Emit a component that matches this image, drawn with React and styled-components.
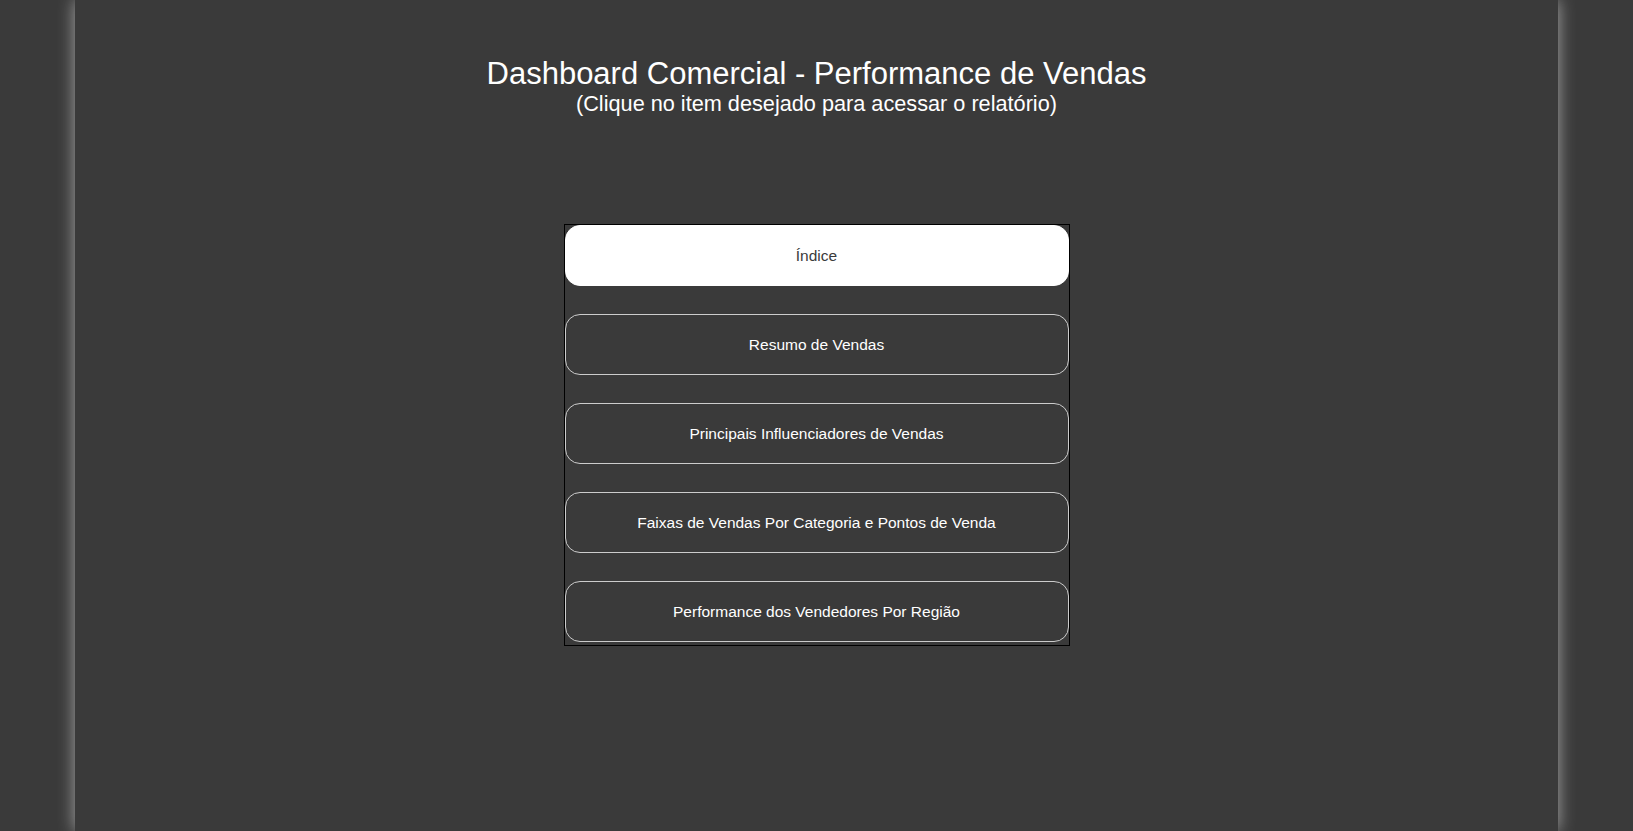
import React from 'react';
import styled, { createGlobalStyle } from 'styled-components';

const GlobalStyle = createGlobalStyle`
  html, body {
    margin: 0;
    padding: 0;
    background-color: #3a3a3a;
    font-family: "Liberation Sans", Arial, sans-serif;
  }
`;

const Page = styled.div`
  width: 1483px;
  min-height: 100vh;
  margin: 0 auto;
  background-color: #3a3a3a;
  box-shadow: 0 0 16px rgba(255, 255, 255, 0.55);
  display: flex;
  flex-direction: column;
  align-items: center;
  padding-top: 56px;
  box-sizing: border-box;
`;

const Header = styled.header`
  text-align: center;
  color: #ffffff;
  margin-bottom: 107px;

  h1 {
    font-size: 31px;
    font-weight: normal;
    line-height: 35px;
    margin: 0;
  }

  p {
    font-size: 21.7px;
    line-height: 26px;
    margin: 0;
  }
`;

const Menu = styled.nav`
  width: 504px;
  border: 1px solid #000;
  padding-bottom: 3px;
  display: flex;
  flex-direction: column;
  gap: 28px;
`;

const MenuButton = styled.a`
  display: flex;
  align-items: center;
  justify-content: center;
  height: 59px;
  border: 1px solid ${props => props.active ? '#ffffff' : '#cccccc'};
  border-radius: 15px;
  background-color: ${props => props.active ? '#ffffff' : 'transparent'};
  color: ${props => props.active ? '#3a3a3a' : '#ffffff'};
  font-size: 15.5px;
  text-decoration: none;
  cursor: pointer;
`;

const items = [
  'Índice',
  'Resumo de Vendas',
  'Principais Influenciadores de Vendas',
  'Faixas de Vendas Por Categoria e Pontos de Venda',
  'Performance dos Vendedores Por Região',
];

const App = () => (
  <>
    <GlobalStyle />
    <Page>
      <Header>
        <h1>Dashboard Comercial - Performance de Vendas</h1>
        <p>(Clique no item desejado para acessar o relatório)</p>
      </Header>
      <Menu>
        {items.map((item, index) => (
          <MenuButton key={item} active={index === 0}>
            {item}
          </MenuButton>
        ))}
      </Menu>
    </Page>
  </>
);

export default App;
